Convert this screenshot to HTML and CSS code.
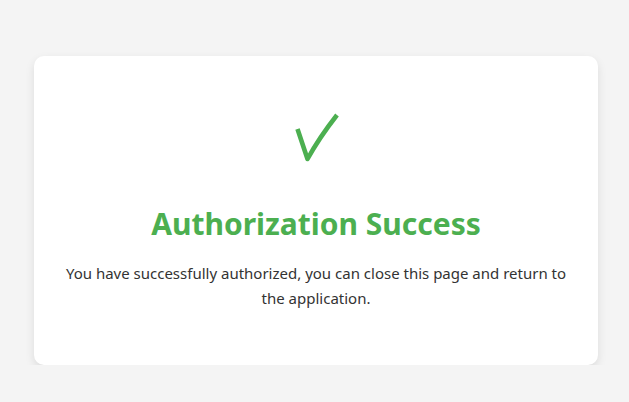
FILE: index.html
```html
<!DOCTYPE html>
<html lang="en">
<head>
<meta charset="utf-8">
<title>Authorization Success</title>
<link rel="stylesheet" href="styles.css">
</head>
<body>
<div class="page">
  <div class="card">
    <div class="icon">
      <svg width="50" height="54" viewBox="0 0 50 54" aria-hidden="true">
        <path d="M6.5 19 L16.5 49 Q28 28 46 5" fill="none" stroke="#4caf50" stroke-width="4.6" stroke-linejoin="round" stroke-linecap="butt"/>
      </svg>
    </div>
    <h1 class="title">Authorization Success</h1>
    <p class="message">You have successfully authorized, you can close this page and return to the application.</p>
  </div>
</div>
</body>
</html>
```
FILE: styles.css
```css
html, body {
  margin: 0;
  padding: 0;
  background: #f4f4f4;
}
body {
  font-family: "Noto Sans", "Open Sans", sans-serif;
  color: #333;
}
.page {
  padding: 56px 31px 0 34px;
}
.card {
  box-sizing: border-box;
  width: 564px;
  height: 309px;
  background: #fff;
  border-radius: 10px;
  box-shadow: 0 4px 10px rgba(0, 0, 0, 0.1);
  text-align: center;
  padding: 54px 30px 0;
}
.icon {
  display: flex;
  justify-content: center;
  height: 54px;
}
.icon svg {
  display: block;
}
.title {
  margin: 40px 0 0;
  font-size: 30px;
  line-height: 40px;
  font-weight: 700;
  color: #4caf50;
}
.message {
  margin: 17px 0 0;
  font-size: 15px;
  line-height: 25px;
  color: #333;
}
```
